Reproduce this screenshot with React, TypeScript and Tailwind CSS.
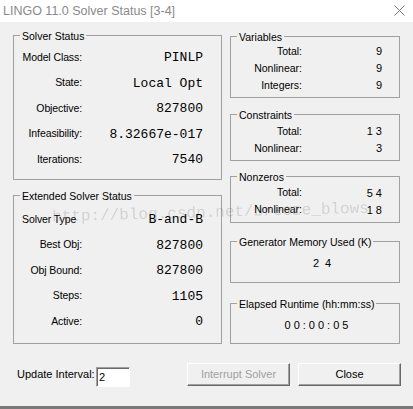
import type { ReactNode } from 'react'

function Group({ title, className, children }: { title: string; className: string; children?: ReactNode }) {
  return (
    <div className={`relative border border-[#a0a0a0] ${className}`}>
      <span className="absolute left-[6px] -top-[7px] whitespace-nowrap bg-[#f0f0f0] px-[2px] text-[10.5px] leading-[14px] text-black">
        {title}
      </span>
      {children}
    </div>
  )
}

function LeftRow({ label, value, left }: { label: string; value: string; left?: boolean }) {
  return (
    <>
      <div className={`whitespace-nowrap text-[10.5px] tracking-[-0.1px] ${left ? 'text-left' : 'text-right'}`}>{label}</div>
      <div className="whitespace-nowrap text-right font-['Liberation_Mono',monospace] text-[13px]">{value}</div>
    </>
  )
}

function RightRow({ label, value }: { label: string; value: string }) {
  return (
    <>
      <div className="whitespace-nowrap text-right text-[10.5px]">{label}</div>
      <div className="text-right text-[11px] tracking-[3px]">{value}</div>
    </>
  )
}

export default function App() {
  return (
    <div className="relative flex h-[409px] w-[413px] flex-col overflow-hidden bg-[#f0f0f0] font-['Liberation_Sans',Arial,sans-serif] text-black">
      {/* title bar */}
      <div className="flex h-[22px] items-center justify-between bg-white pl-[3px] pr-[8px]">
        <span className="text-[12.5px] text-[#8a8a8a]">LINGO 11.0 Solver Status [3-4]</span>
        <svg width="11" height="11" viewBox="0 0 11 11" className="mt-[-1px]">
          <path d="M0.5 0.5 L10.5 10.5 M10.5 0.5 L0.5 10.5" stroke="#777" strokeWidth="1" />
        </svg>
      </div>

      <div className="flex">
        <div className="ml-[13px] flex w-[209px] flex-col">
          <Group title="Solver Status" className="mt-[13px] h-[145px]">
            <div className="grid grid-cols-[60px_1fr] auto-rows-[25.5px] items-center pl-[8px] pr-[18px] pt-[9px]">
              <LeftRow label="Model Class:" value="PINLP" />
              <LeftRow label="State:" value="Local Opt" />
              <LeftRow label="Objective:" value="827800" />
              <LeftRow label="Infeasibility:" value="8.32667e-017" />
              <LeftRow label="Iterations:" value="7540" />
            </div>
          </Group>
          <Group title="Extended Solver Status" className="mt-[15px] h-[149px]">
            <div className="grid grid-cols-[60px_1fr] auto-rows-[25.5px] items-center pl-[8px] pr-[18px] pt-[11px]">
              <LeftRow label="Solver Type" value="B-and-B" left />
              <LeftRow label="Best Obj:" value="827800" />
              <LeftRow label="Obj Bound:" value="827800" />
              <LeftRow label="Steps:" value="1105" />
              <LeftRow label="Active:" value="0" />
            </div>
          </Group>
        </div>

        <div className="ml-[8px] flex w-[170px] flex-col">
          <Group title="Variables" className="mt-[14px] h-[62px]">
            <div className="grid grid-cols-[71px_1fr] auto-rows-[17px] items-center pr-[14px] pt-[6px]">
              <RightRow label="Total:" value="9" />
              <RightRow label="Nonlinear:" value="9" />
              <RightRow label="Integers:" value="9" />
            </div>
          </Group>
          <Group title="Constraints" className="mt-[16px] h-[47px]">
            <div className="grid grid-cols-[71px_1fr] auto-rows-[17px] items-center pr-[14px] pt-[8px]">
              <RightRow label="Total:" value="13" />
              <RightRow label="Nonlinear:" value="3" />
            </div>
          </Group>
          <Group title="Nonzeros" className="mt-[15px] h-[47px]">
            <div className="grid grid-cols-[71px_1fr] auto-rows-[16.5px] items-center pr-[14px] pt-[8px]">
              <RightRow label="Total:" value="54" />
              <RightRow label="Nonlinear:" value="18" />
            </div>
          </Group>
          <Group title="Generator Memory Used (K)" className="mt-[18px] h-[42px]">
            <div className="flex h-full items-center justify-center pl-[20px] pt-[3px] text-[11px] tracking-[6px]">24</div>
          </Group>
          <Group title="Elapsed Runtime (hh:mm:ss)" className="mt-[20px] h-[41px]">
            <div className="flex h-full items-center justify-center pl-[6px] pt-[3px] text-[11px] tracking-[3px]">00:00:05</div>
          </Group>
        </div>
      </div>

      {/* bottom controls */}
      <div className="flex h-[62px] items-start pt-[19px]">
        <div className="ml-[17px] flex h-[23px] w-[79px] items-center whitespace-nowrap text-[11px]">Update Interval:</div>
        <div className="mt-[4px] flex h-[20px] w-[34px] items-center border border-b-white border-l-[#a0a0a0] border-r-white border-t-[#a0a0a0] bg-white pl-[2px] text-[11px] shadow-[inset_1px_1px_0_#696969]">
          2
        </div>
        <div className="ml-[57px] flex h-[23px] w-[103px] items-center justify-center border border-b-[#696969] border-l-white border-r-[#696969] border-t-white text-[11px] text-[#a0a0a0] shadow-[inset_-1px_-1px_0_#a0a0a0]">
          Interrupt Solver
        </div>
        <div className="ml-[8px] flex h-[23px] w-[103px] items-center justify-center border border-b-[#696969] border-l-white border-r-[#696969] border-t-white text-[11px] shadow-[inset_-1px_-1px_0_#a0a0a0]">
          Close
        </div>
      </div>
      <div className="h-[3px] bg-[#7a7a7a]" />

      {/* watermark */}
      <div className="pointer-events-none absolute left-[52px] top-[204px] rotate-[-1.5deg] whitespace-nowrap font-['Liberation_Mono',monospace] text-[16px] leading-[18px] text-black/15">
        http://blog.csdn.net/breeze_blows
      </div>
    </div>
  )
}
